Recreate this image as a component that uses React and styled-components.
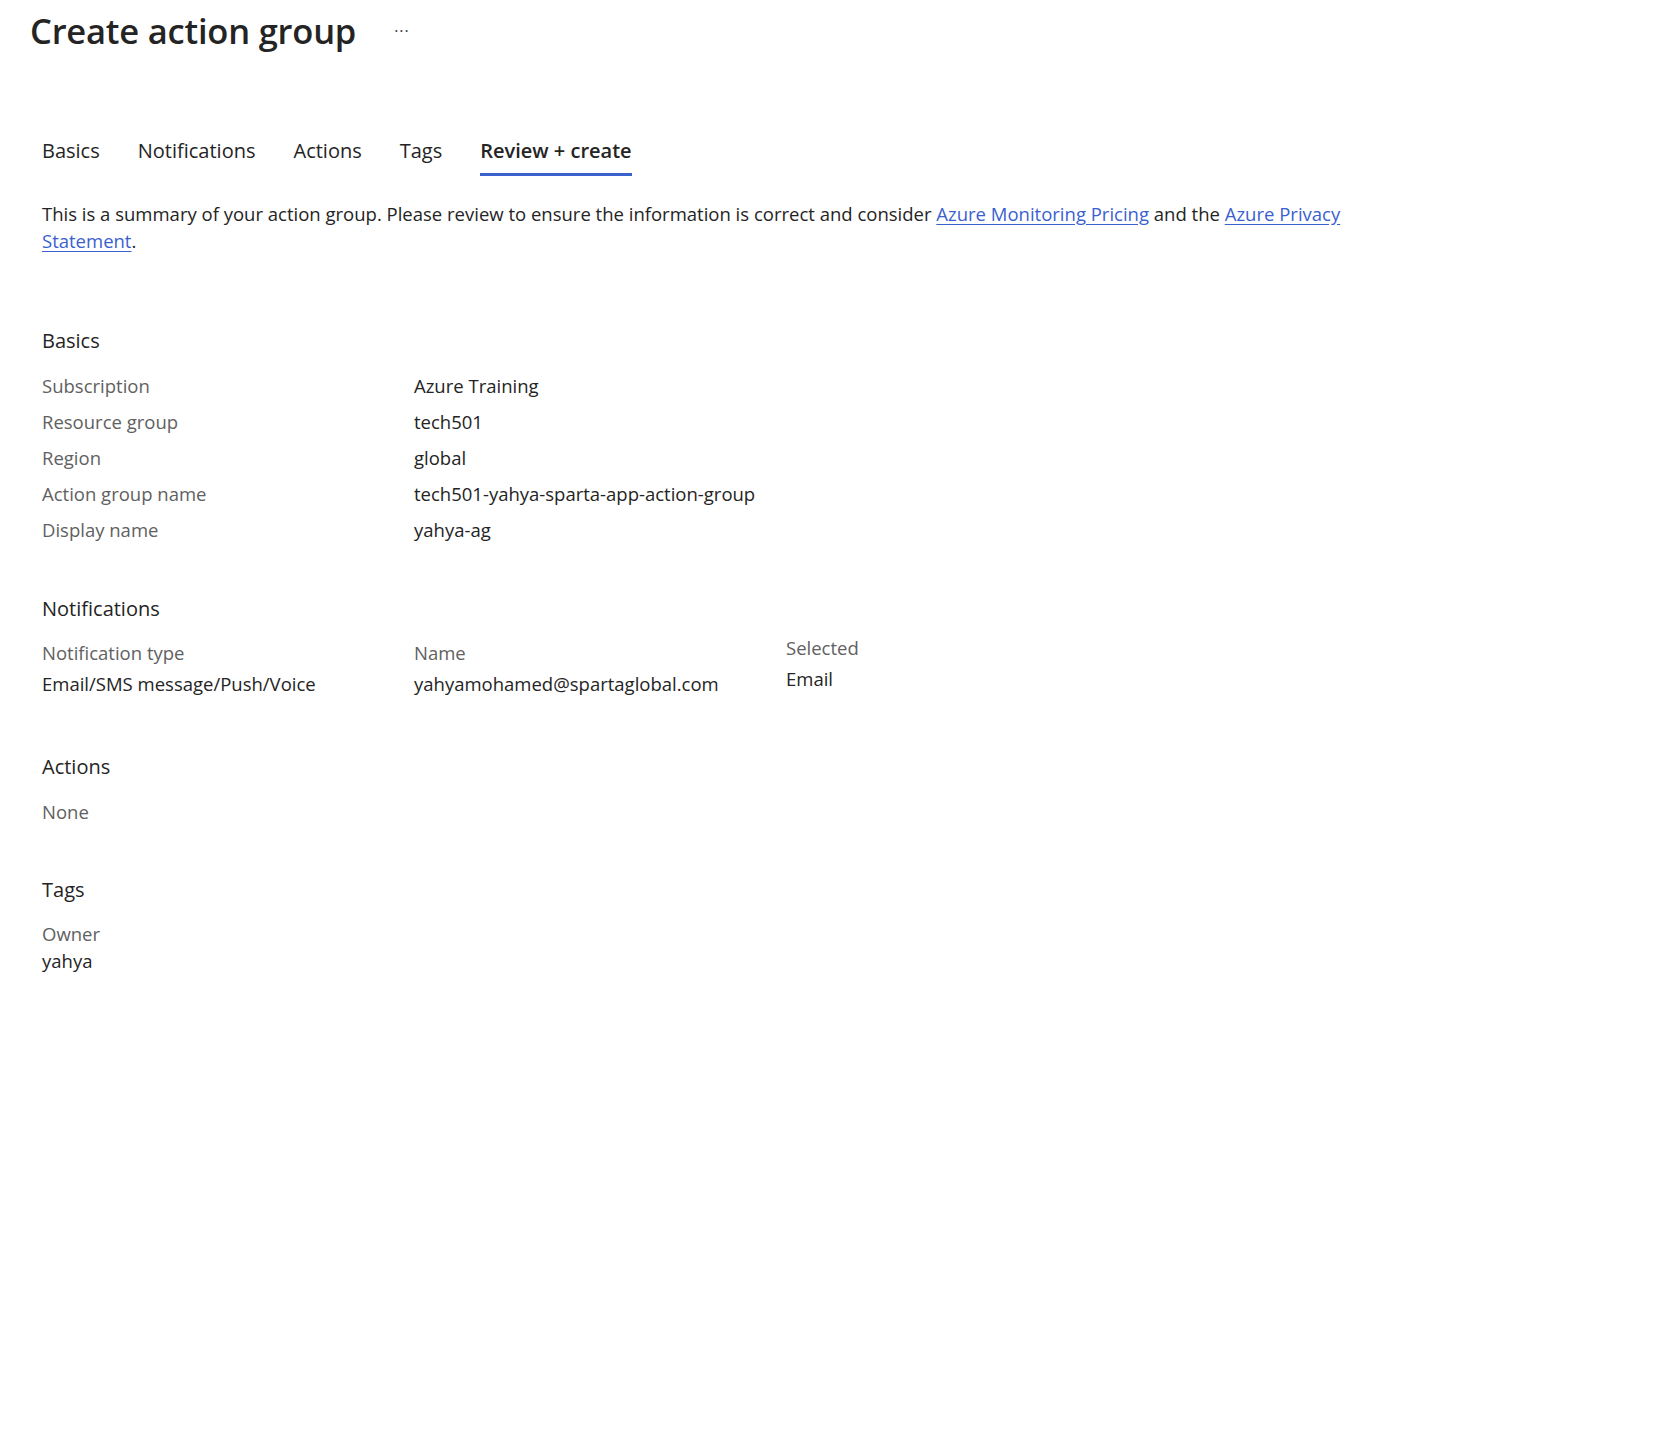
import React from 'react';
import styled, { createGlobalStyle } from 'styled-components';

const GlobalStyle = createGlobalStyle`
	body {
		margin: 0;
		background: #ffffff;
		font-family: "Open Sans", "Noto Sans", Arial, sans-serif;
		color: #242424;
	}
`;

const Page = styled.div`
	padding-top: 9px;
	min-height: 1450px;
	box-sizing: border-box;
`;

const Header = styled.div`
	display: flex;
	align-items: center;
	gap: 38px;
	padding-left: 30px;
	height: 44px;
`;

const Title = styled.h1`
	margin: 0;
	font-size: 34.5px;
	font-weight: 600;
	line-height: 44px;
	color: #242424;
	letter-spacing: -0.2px;
`;

const More = styled.span`
	font-size: 16px;
	color: #424242;
	letter-spacing: 1px;
	margin-top: 0;
`;

const Content = styled.div`
	padding-left: 42px;
`;

const TabList = styled.div`
	display: flex;
	gap: 38px;
	margin-top: 84px;
`;

const Tab = styled.div`
	font-size: 20px;
	line-height: 28px;
	padding-bottom: 8px;
	border-bottom: 3px solid ${(p) => (p.active ? '#3b62cc' : 'transparent')};
	font-weight: ${(p) => (p.active ? 600 : 400)};
	color: #242424;
`;

const Intro = styled.p`
	margin: 24px 0 0;
	font-size: 18.5px;
	line-height: 27px;
	max-width: 1340px;
	color: #242424;

	a {
		color: #3b5fcf;
		text-decoration: underline;
		text-underline-offset: 3px;
	}
`;

const Section = styled.section`
	margin-top: ${(p) => p.gap}px;
`;

const Heading = styled.h2`
	margin: 0 0 ${(p) => p.after}px;
	font-size: 20px;
	font-weight: 400;
	line-height: 28px;
	color: #242424;
`;

const Rows = styled.div`
	display: grid;
	grid-template-columns: 372px 372px 372px;
	line-height: ${(p) => p.lh}px;
	font-size: 18.5px;
`;

const Label = styled.div`
	color: #616161;
	margin-top: ${(p) => (p.raised ? -5 : 0)}px;
`;

const Value = styled.div`
	color: #242424;
	margin-top: ${(p) => (p.raised ? -5 : 0)}px;
`;

const Stack = styled.div`
	font-size: 18.5px;
	line-height: ${(p) => p.lh}px;
`;

const tabs = ['Basics', 'Notifications', 'Actions', 'Tags', 'Review + create'];

const basics = [
	['Subscription', 'Azure Training'],
	['Resource group', 'tech501'],
	['Region', 'global'],
	['Action group name', 'tech501-yahya-sparta-app-action-group'],
	['Display name', 'yahya-ag'],
];

export default function App() {
	return (
		<Page>
			<GlobalStyle />
			<Header>
				<Title>Create action group</Title>
				<More>···</More>
			</Header>
			<Content>
				<TabList>
					{tabs.map((t) => (
						<Tab key={t} active={t === 'Review + create'}>
							{t}
						</Tab>
					))}
				</TabList>

				<Intro>
					This is a summary of your action group. Please review to ensure the information is correct and consider{' '}
					<a href="#pricing">Azure Monitoring Pricing</a> and the <a href="#privacy">Azure Privacy Statement</a>.
				</Intro>

				<Section gap={73}>
					<Heading after={13}>Basics</Heading>
					<Rows lh={36}>
						{basics.map(([k, v]) => (
							<React.Fragment key={k}>
								<Label>{k}</Label>
								<Value>{v}</Value>
								<div />
							</React.Fragment>
						))}
					</Rows>
				</Section>

				<Section gap={47}>
					<Heading after={14}>Notifications</Heading>
					<Rows lh={31}>
						<Label>Notification type</Label>
						<Label>Name</Label>
						<Label raised>Selected</Label>
						<Value>Email/SMS message/Push/Voice</Value>
						<Value>yahyamohamed@spartaglobal.com</Value>
						<Value raised>Email</Value>
					</Rows>
				</Section>

				<Section gap={54}>
					<Heading after={13}>Actions</Heading>
					<Stack lh={36}>
						<Label>None</Label>
					</Stack>
				</Section>

				<Section gap={46}>
					<Heading after={16}>Tags</Heading>
					<Stack lh={27}>
						<Label>Owner</Label>
						<Value>yahya</Value>
					</Stack>
				</Section>
			</Content>
		</Page>
	);
}
